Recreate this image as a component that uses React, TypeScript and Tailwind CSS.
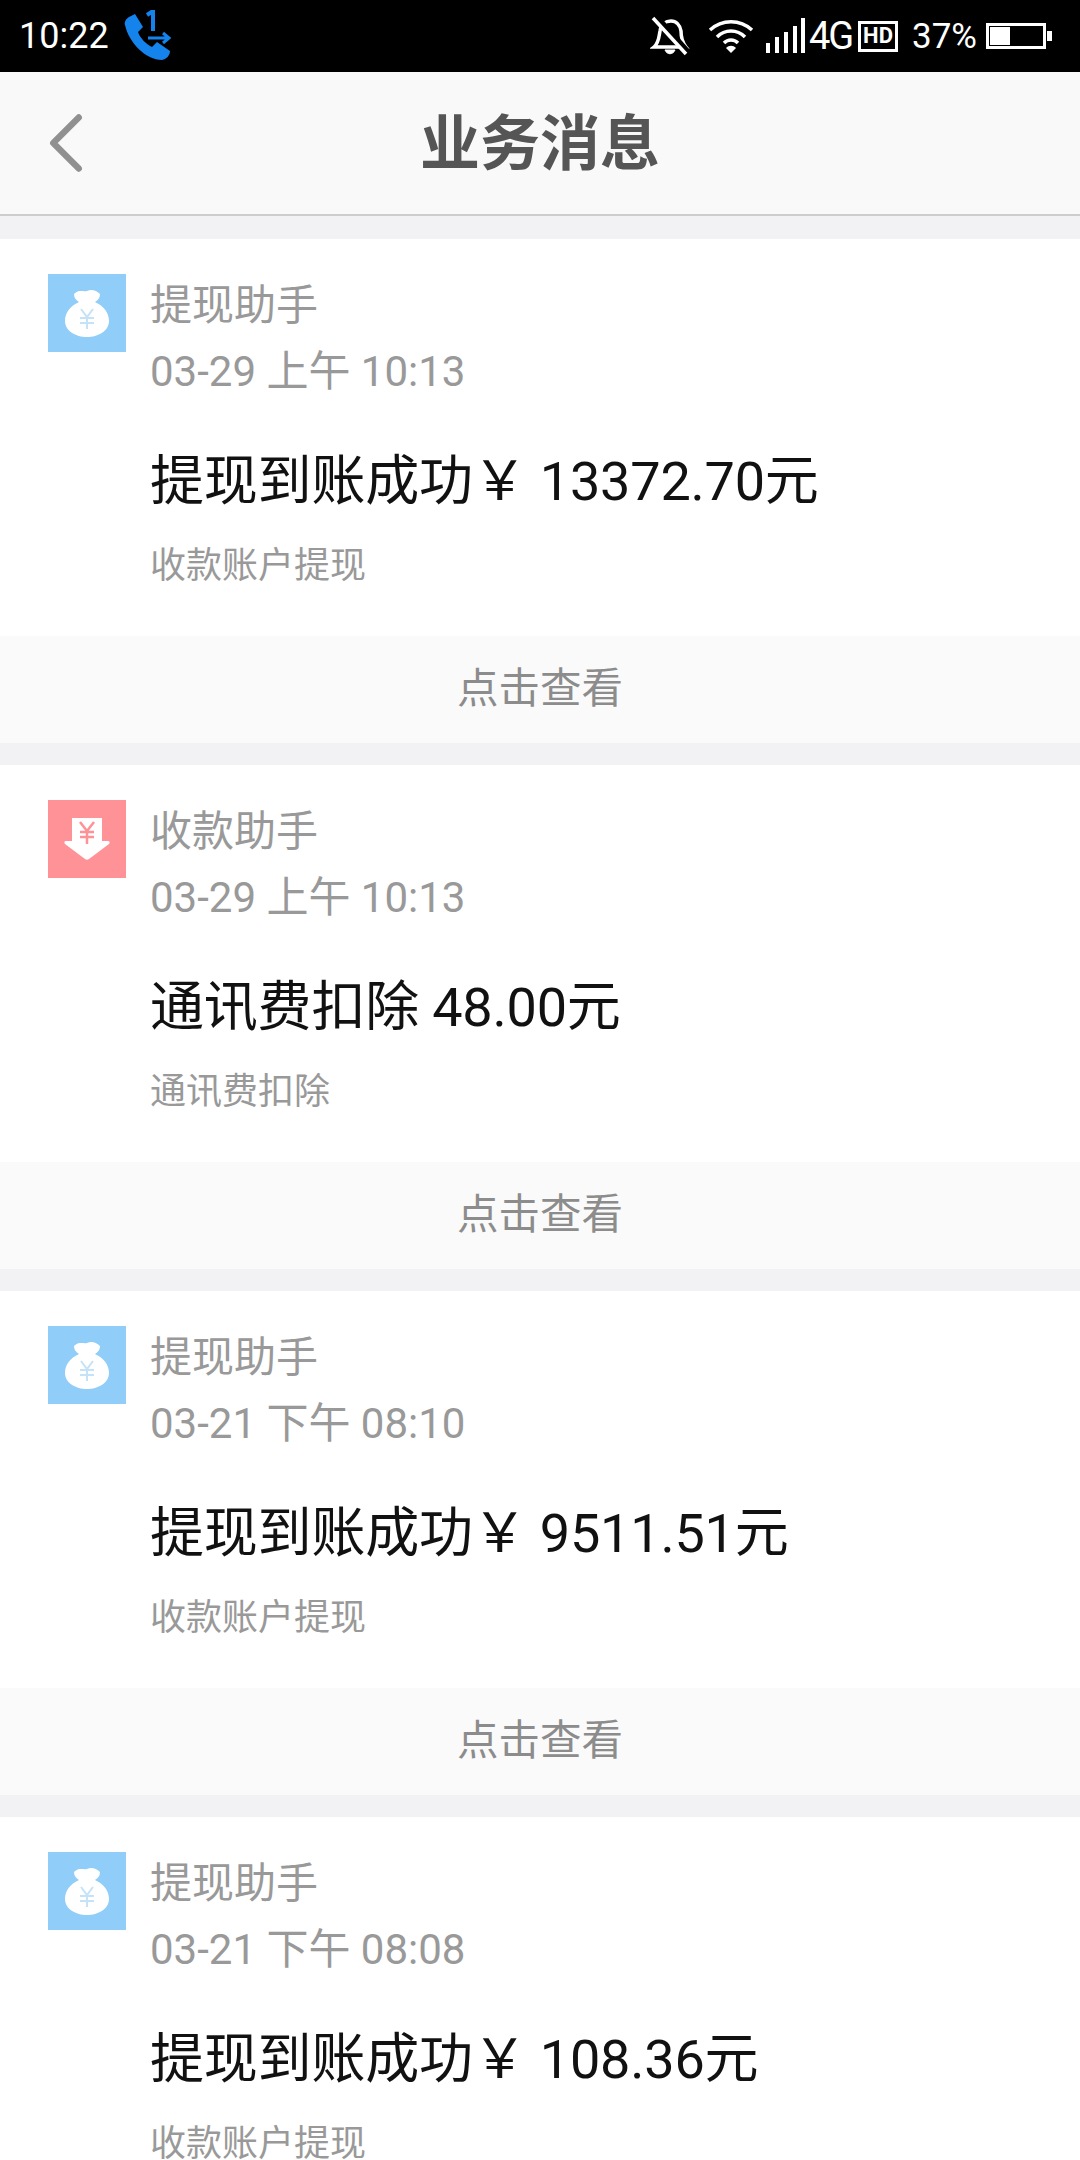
import React from 'react';
import { ChevronLeft } from 'lucide-react';

const font = "font-['Roboto','Noto_Sans_CJK_SC',sans-serif]";

const PhoneIcon = () => (
  <svg width="50" height="52" viewBox="0 0 50 52" className="ml-[13px] mt-[-1px]">
    <path d="M3 15 C2 12 4 9 7 7 L13 4 L21 17 L16 22 C18 28 24 34 30 37 L35 32 L48 41 C48 45 45 49 40 50 C24 50 7 33 3 15 Z" fill="#1583ec" />
    <path d="M25 5 L31 1 L31 21" stroke="#1583ec" strokeWidth="4" fill="none" />
    <path d="M26 28 L46 28 M41 23 L47 28 L41 33" stroke="#1583ec" strokeWidth="3" fill="none" />
  </svg>
);

const StatusRight = () => (
  <div className="flex items-center">
    <svg width="40" height="40" viewBox="0 0 40 40" className="mr-[18px]" fill="none" stroke="#fff">
      <path d="M4 31 C9 27 9 20 10 15 C11 8 16 5 21 5 C26 5 30 9 31 15 C31 20 32 26 36 31 Z" strokeWidth="3.5" />
      <path d="M15 34 C17 39 23 39 25 34 Z" fill="#fff" strokeWidth="1" />
      <path d="M5 0 L38 37" stroke="#000" strokeWidth="7" />
      <path d="M3 2 L36 38" strokeWidth="3.5" />
    </svg>
    <svg width="46" height="36" viewBox="0 0 46 36" className="mr-[12px]" fill="none" stroke="#fff" strokeWidth="3.5">
      <path d="M2 12 C14 1 32 1 44 12" />
      <path d="M9 19 C17 11 29 11 37 19" />
      <path d="M16 25 C20 21 26 21 30 25" />
      <path d="M18 30 L23 35 L28 30 C25 27 21 27 18 30 Z" fill="#fff" stroke="none" />
    </svg>
    <svg width="40" height="36" viewBox="0 0 40 36" fill="#fff">
      <rect x="0" y="25" width="4" height="10" />
      <rect x="9" y="19" width="4" height="16" />
      <rect x="18" y="14" width="4" height="21" />
      <rect x="27" y="8" width="4" height="27" />
      <rect x="35" y="0" width="4" height="35" />
    </svg>
    <span className="w-[45px] ml-[3px] text-[38px] leading-none text-white tracking-[-2px] font-['Roboto',sans-serif]">4G</span>
    <div className="ml-[4px] w-[40px] h-[31px] border-[3px] border-white flex items-center justify-center">
      <span className="text-[22px] leading-none font-bold text-white font-['Roboto',sans-serif]">HD</span>
    </div>
    <span className="ml-[14px] text-[35px] leading-none text-white font-['Roboto',sans-serif]">37%</span>
    <div className="ml-[9px] w-[60px] h-[26px] border-[3px] border-white p-[1px]">
      <div className="w-[20px] h-full bg-white" />
    </div>
    <div className="w-[5px] h-[10px] bg-white ml-[1px]" />
  </div>
);

const BagIcon = () => (
  <div className="w-[78px] h-[78px] bg-[#90cdf8] flex items-center justify-center">
    <svg width="44" height="48" viewBox="0 0 44 48">
      <path d="M9 5 C14 0 18 3 22 2 C26 0 31 1 35 5 C35 9 33 11 30 13 C39 17 44 24 44 32 C44 42 33 48 22 48 C11 48 0 42 0 32 C0 24 5 17 14 13 C11 11 9 9 9 5 Z" fill="#fff" />
      <path d="M16 20 L22 28 L28 20 M22 28 L22 40 M15 29 L29 29 M15 34 L29 34" stroke="#c5e3f8" strokeWidth="2" fill="none" />
    </svg>
  </div>
);

const ArrowIcon = () => (
  <div className="w-[78px] h-[78px] bg-[#fe9297] flex items-center justify-center">
    <svg width="46" height="44" viewBox="0 0 46 44">
      <path d="M8 1 L38 1 L38 24 L44 24 C46 24 46 26 45 27 L25 42 C23.5 43 22.5 43 21 42 L1 27 C0 26 0 24 2 24 L8 24 Z" fill="#fff" />
      <path d="M16 5 L23 14 L30 5 M23 14 L23 27 M16 15 L30 15 M16 20 L30 20" stroke="#fe9297" strokeWidth="2.5" fill="none" />
    </svg>
  </div>
);

const messages = [
  { icon: 'bag', title: '提现助手', time: '03-29 上午 10:13', main: '提现到账成功￥ 13372.70元', sub: '收款账户提现' },
  { icon: 'arrow', title: '收款助手', time: '03-29 上午 10:13', main: '通讯费扣除 48.00元', sub: '通讯费扣除' },
  { icon: 'bag', title: '提现助手', time: '03-21 下午 08:10', main: '提现到账成功￥ 9511.51元', sub: '收款账户提现' },
  { icon: 'bag', title: '提现助手', time: '03-21 下午 08:08', main: '提现到账成功￥ 108.36元', sub: '收款账户提现' },
];

const MessageCard = ({ m, last }: { m: (typeof messages)[number]; last: boolean }) => (
  <div className="bg-white h-[504px] shrink-0 flex flex-col">
    <div className="h-[397px] shrink-0 pl-[48px] pt-[35px] flex">
      <div className="shrink-0">{m.icon === 'bag' ? <BagIcon /> : <ArrowIcon />}</div>
      <div className="ml-[24px]">
        <div className="text-[42px] leading-[50px] mt-[7px] text-[#999]">{m.title}</div>
        <div className="text-[42px] leading-[50px] mt-[16px] text-[#999]">{m.time}</div>
        <div className="text-[54px] leading-[70px] mt-[50px] text-[#111] tracking-[-0.2px] whitespace-nowrap">{m.main}</div>
        <div className="text-[36px] leading-[46px] mt-[26px] text-[#999]">{m.sub}</div>
      </div>
    </div>
    {!last && (
      <div className="h-[107px] shrink-0 bg-[#fafafa] flex items-center justify-center text-[41.5px] text-[#8c8c8c]">
        点击查看
      </div>
    )}
  </div>
);

export default function App() {
  return (
    <div className={`w-[1080px] h-[2160px] overflow-hidden bg-[#f2f2f5] flex flex-col ${font}`}>
      <div className="h-[72px] shrink-0 bg-black flex items-center justify-between pl-[19px] pr-[28px]">
        <div className="flex items-center">
          <span className="text-[36px] leading-none text-white">10:22</span>
          <PhoneIcon />
        </div>
        <StatusRight />
      </div>

      <div className="relative h-[144px] shrink-0 bg-[#f9f9f9] border-b-2 border-[#cdcdcd] flex items-center justify-center">
        <ChevronLeft size={102} strokeWidth={1.5} className="absolute left-[15px] top-[20px] text-[#909090]" />
        <span className="text-[60px] mt-[3px] font-bold text-[#555]">业务消息</span>
      </div>

      <div className="flex flex-col gap-[22px] pt-[23px]">
        {messages.map((m, i) => (
          <MessageCard key={i} m={m} last={i === messages.length - 1} />
        ))}
      </div>
    </div>
  );
}
